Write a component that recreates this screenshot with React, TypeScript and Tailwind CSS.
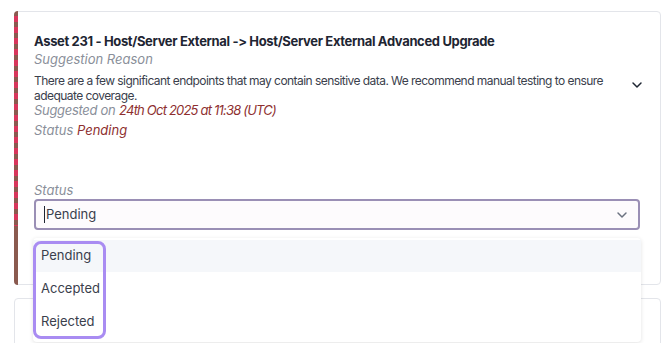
import React from "react";

const Chevron = ({ className }: { className?: string }) => (
  <svg viewBox="0 0 24 24" className={className} fill="none" stroke="currentColor" strokeWidth={2.2} strokeLinecap="round" strokeLinejoin="round">
    <path d="M6 9l6 6 6-6" />
  </svg>
);

export default function App() {
  return (
    <div className="w-[670px] h-[343px] bg-white overflow-hidden relative font-['Inter',sans-serif]">
      <div className="pt-[11px] pl-[14px] pr-[9px]">
        <div className="relative h-[274px] border border-[#e3e5ea] rounded-[4px] flex">
          <div className="w-[4px] -ml-px -my-px rounded-l-[4px] bg-[linear-gradient(to_bottom,transparent_0,transparent_215px,#8a5a4f_215px),repeating-linear-gradient(to_bottom,#8a5a4f_0,#8a5a4f_5px,#d8365c_5px,#d8365c_11px)]" />
          <div className="flex-1 pl-[16px] pr-[20px] pt-[20px]">
            <div className="flex items-start">
              <div className="flex-1">
                <div className="text-[13px] font-bold text-[#1e2532] leading-[18px] tracking-[-0.35px]">
                  Asset 231 - Host/Server External -&gt; Host/Server External Advanced Upgrade
                </div>
                <div className="text-[13px] italic text-[#8a8f9a] leading-[18px] mt-[0px]">Suggestion Reason</div>
                <div className="text-[12px] text-[#3a404c] leading-[15px] mt-[5px] w-[580px] tracking-[-0.55px]">
                  There are a few significant endpoints that may contain sensitive data. We recommend manual testing to ensure adequate coverage.
                </div>
                <div className="text-[13px] italic text-[#8a8f9a] leading-[18px] mt-[-2px]">
                  <span className="tracking-[-0.3px]">Suggested on</span>{" "}
                  <span className="text-[#8e2f2f] tracking-[-0.8px]">24th Oct 2025 at 11:38 (UTC)</span>
                </div>
                <div className="text-[13px] italic text-[#8a8f9a] leading-[18px] mt-[2px]">
                  Status <span className="text-[#8e2f2f]">Pending</span>
                </div>
              </div>
              <Chevron className="w-[16px] h-[16px] text-[#1e2532] mt-[45px] mr-[-5px]" />
            </div>
            <div className="mt-[42px] text-[13px] italic text-[#8a8f9a] leading-[18px]">Status</div>
            <div className="mt-0 h-[31px] border-2 border-[#9a8fb5] rounded-[4px] bg-[#fdfbfd] flex items-center pl-[8px] pr-[8px]">
              <span className="w-px h-[17px] bg-[#1e2532] mr-px" />
              <span className="text-[13px] text-[#3a404c]">Pending</span>
              <div className="flex-1" />
              <Chevron className="w-[16px] h-[16px] text-[#6b7280]" />
            </div>
          </div>
        </div>
        <div className="mt-[13px] h-[60px] border border-[#e3e5ea] rounded-[4px]" />
      </div>

      <div className="absolute left-[33px] top-[238px] w-[608px] h-[104px] bg-white rounded-[4px] shadow-[0_1px_4px_rgba(0,0,0,0.12)] pt-[2px]">
        <div className="h-[32px] bg-[#f5f7fa] flex items-center pl-[8px] text-[13px] text-[#3a404c]">Pending</div>
        <div className="h-[33px] flex items-center pl-[8px] text-[13px] text-[#3a404c]">Accepted</div>
        <div className="h-[33px] flex items-center pl-[8px] text-[13px] text-[#3a404c]">Rejected</div>
        <div className="absolute left-0 top-[3px] w-[73px] h-[98px] border-[3px] border-[#a98cf2] rounded-[8px]" />
      </div>
    </div>
  );
}
